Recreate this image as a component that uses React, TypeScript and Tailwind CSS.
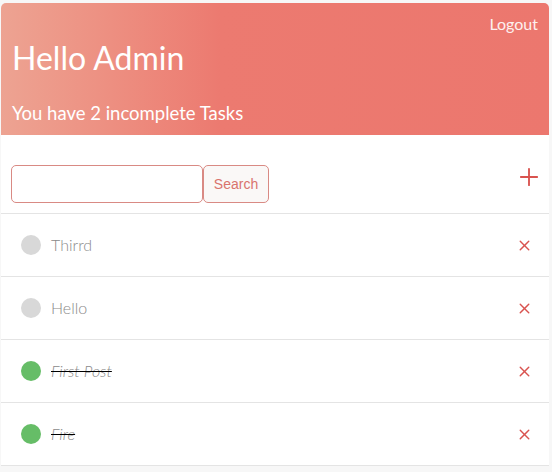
import { Plus, X } from "lucide-react";

const tasks = [
	{ name: "Thirrd", done: false },
	{ name: "Hello", done: false },
	{ name: "First Post", done: true },
	{ name: "Fire", done: true },
];

function App()
{
	return (
		<div className="min-h-[472px] w-[552px] bg-[#f7f7f7] pt-[3px] pl-[1px]" style={{ fontFamily: "Lato, 'Noto Sans', sans-serif" }}>
			<div className="w-[548px] bg-white rounded-t-[5px] overflow-hidden">
				<div className="h-[132px] bg-gradient-to-r from-[#eda392] via-[#ec7a70] via-40% to-[#ec776e] text-white flex flex-col px-[11px]">
					<div className="flex justify-end pt-[11px] h-[32px]">
						<span className="text-[16px] leading-[20px] text-[#fdf0ee]">Logout</span>
					</div>
					<h1 className="text-[32px] leading-[40px] mt-[3px]">Hello Admin</h1>
					<p className="text-[18.5px] leading-[24px] mt-[23px]">You have 2 incomplete Tasks</p>
				</div>

				<div className="h-[79px] flex items-end pb-[10px] px-[10px] border-b border-[#e4e4e4]">
					<input className="w-[192px] h-[38px] border border-[#d98a84] rounded-[5px] outline-none" />
					<button className="h-[38px] w-[66px] border border-[#d98a84] rounded-[5px] bg-[#faf8f7] text-[#d9736d] text-[14px]" style={{ fontFamily: "'Liberation Sans', Arial, sans-serif" }}>
						Search
					</button>
					<div className="ml-auto mr-[-4px] self-start mt-[28px] text-[#d9534f]">
						<Plus size={28} strokeWidth={1.6} />
					</div>
				</div>

				{tasks.map((t) => (
					<div key={t.name} className="h-[63px] flex items-center pl-[20px] pr-[16px] border-b border-[#e4e4e4]">
						<span className={"w-[20px] h-[20px] rounded-full " + (t.done ? "bg-[#66bd67]" : "bg-[#d8d8d8]")} />
						<span className={"ml-[10px] text-[16px] font-light text-[#8a8a8a] " + (t.done ? "italic line-through decoration-black" : "")}>
							{t.name}
						</span>
						<span className="ml-auto text-[#d9534f]">
							<X size={17} strokeWidth={2} />
						</span>
					</div>
				))}
			</div>
		</div>
	);
}

export default App;
